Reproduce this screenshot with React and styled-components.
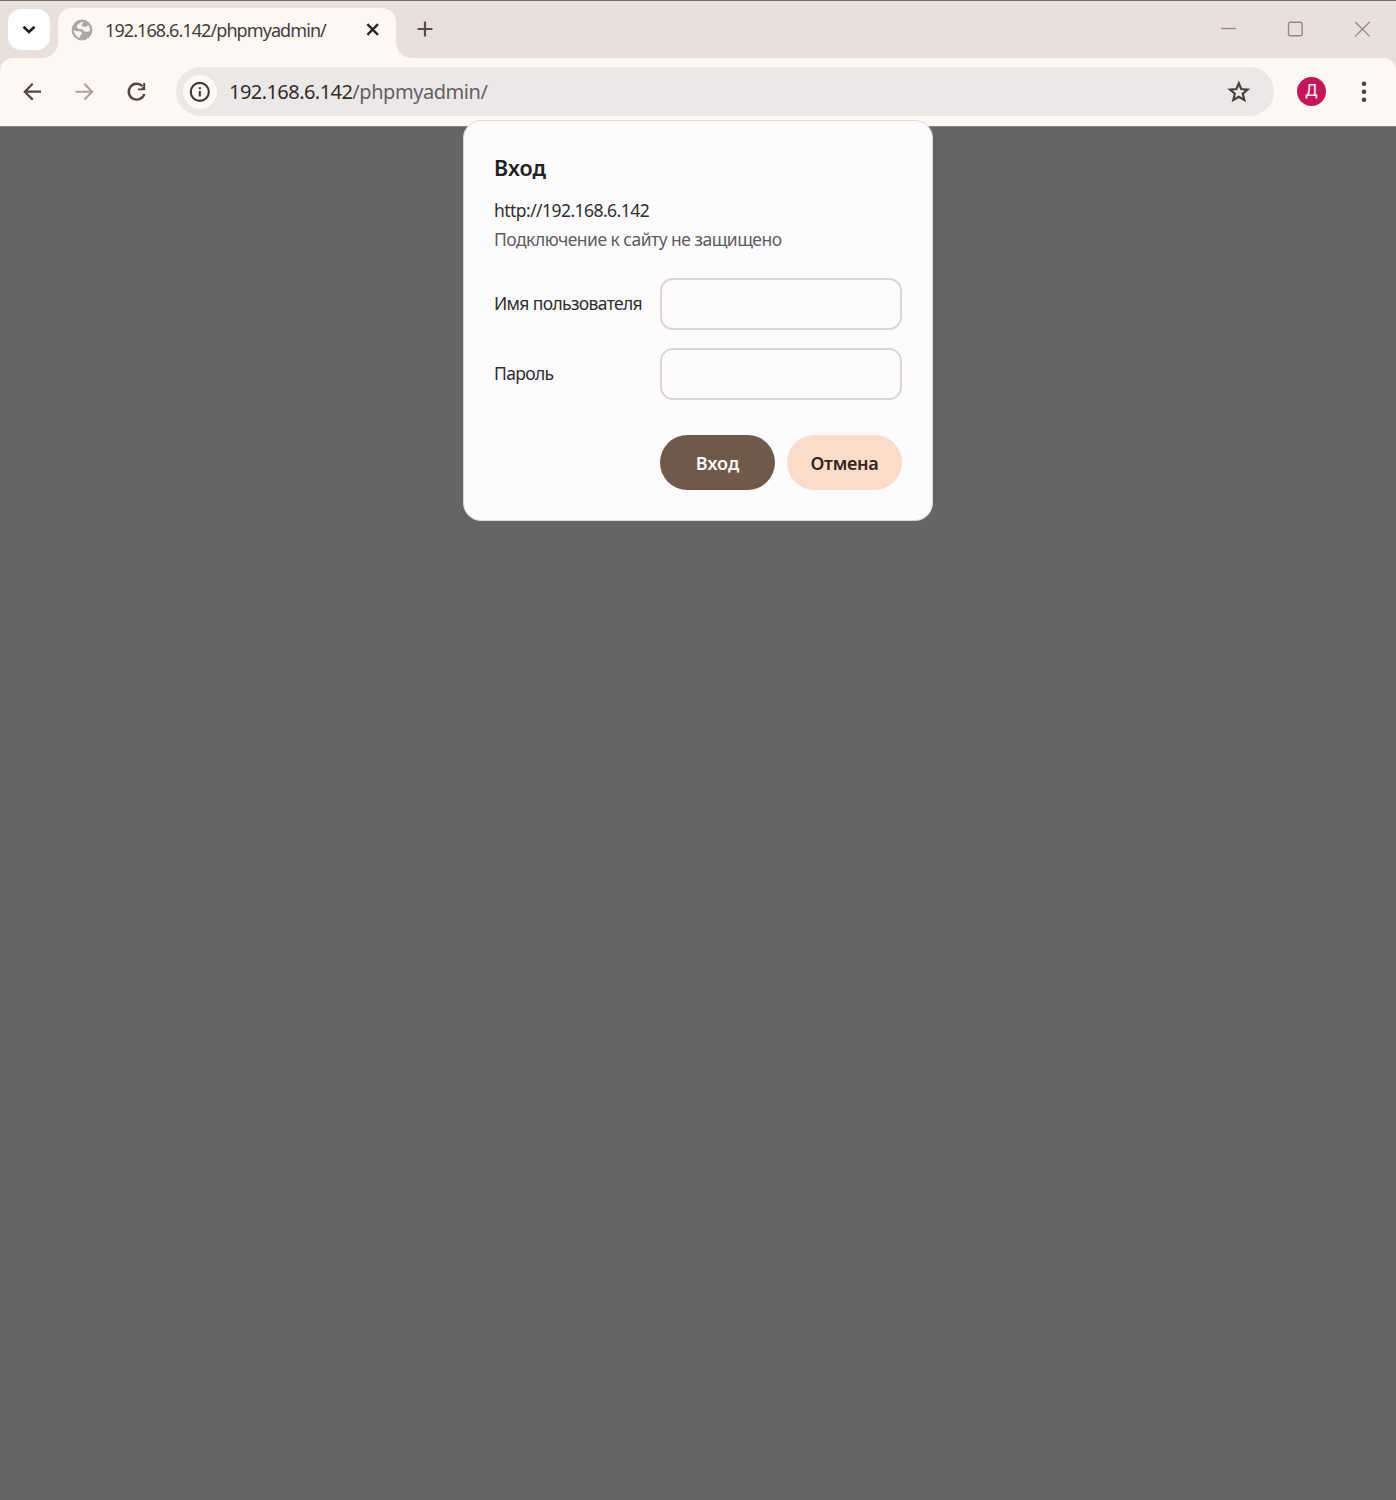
import React from "react";
import styled, { createGlobalStyle } from "styled-components";

const GlobalStyle = createGlobalStyle`
  * { box-sizing: border-box; }
  body {
    margin: 0;
    background: #656565;
    font-family: "Noto Sans", "Open Sans", sans-serif;
    color: #2a2624;
  }
  button { font: inherit; border: 0; padding: 0; background: none; color: inherit; }
`;

const Window = styled.div`
  display: flex;
  flex-direction: column;
  height: 1500px;
  background: #656565;
  overflow: hidden;
`;

const TitleBar = styled.header`
  display: flex;
  height: 58px;
  flex: none;
  padding: 7px 0 0 8px;
  border-top: 1px solid #7a6d6c;
  background: #eae0db;
`;

const TabSearch = styled.button`
  display: grid;
  place-items: center;
  width: 42px;
  height: 41px;
  margin-top: 1px;
  border-radius: 13px;
  background: #fffefe;
`;

const Tab = styled.div`
  position: relative;
  display: flex;
  align-items: center;
  width: 338px;
  height: 50px;
  margin-left: 8px;
  padding: 0 13px 6px 13px;
  border-radius: 14px 14px 0 0;
  background: #fef8f5;

  &::before,
  &::after {
    content: "";
    position: absolute;
    bottom: 0;
    width: 15px;
    height: 15px;
  }
  &::before {
    right: 100%;
    background: radial-gradient(circle at 0 0, transparent 14.5px, #fef8f5 15px);
  }
  &::after {
    left: 100%;
    background: radial-gradient(circle at 100% 0, transparent 14.5px, #fef8f5 15px);
  }
`;

const TabTitle = styled.span`
  flex: 1;
  margin-left: 12px;
  font-size: 18px;
  line-height: 24px;
  letter-spacing: ${(p) => p.$track}px;
  white-space: nowrap;
  color: #423d3b;
`;

const NewTab = styled.button`
  display: grid;
  place-items: center;
  width: 30px;
  height: 42px;
  margin-left: 14px;
`;

const WindowControls = styled.div`
  display: flex;
  gap: 51px;
  margin-left: auto;
  padding: 13px 26px 0 0;
  color: #93877f;
`;

const Toolbar = styled.nav`
  display: flex;
  align-items: center;
  height: 68px;
  padding: 0 0 1px 20px;
  border-radius: 13px 13px 0 0;
  background: #fef8f5;
  color: #51473f;
`;

const ToolbarWrap = styled.div`
  flex: none;
  background: #eae0db;
`;

const NavButtons = styled.div`
  display: flex;
  gap: 28px;
`;

const NavButton = styled.button`
  display: grid;
  place-items: center;
  width: 24px;
  height: 24px;
  color: ${(p) => (p.$disabled ? "#aaa19c" : "#51473f")};
`;

const Omnibox = styled.div`
  display: flex;
  align-items: center;
  width: 1098px;
  height: 49px;
  margin-left: 28px;
  padding: 0 23px 0 7px;
  border-radius: 25px;
  background: #ece8e8;
`;

const SiteInfo = styled.button`
  display: grid;
  place-items: center;
  width: 34px;
  height: 34px;
  border-radius: 50%;
  background: #fef9f7;
  color: #3c3836;
`;

const Url = styled.span`
  flex: 1;
  margin-left: 12px;
  font-size: 20px;
  line-height: 28px;
  letter-spacing: ${(p) => p.$track}px;
  white-space: nowrap;
  color: #64605f;
`;

const Host = styled.span`
  color: #302d2c;
  letter-spacing: -0.55px;
`;

const Avatar = styled.span`
  display: grid;
  place-items: center;
  width: 29px;
  height: 29px;
  margin-left: 23px;
  padding-bottom: 2px;
  border-radius: 50%;
  background: #c2185b;
  color: #fbe4ee;
  font-size: 16px;
  font-weight: 500;
  line-height: 27px;
`;

const MenuButton = styled(NavButton)`
  margin-left: 26px;
  color: #45403e;
`;

const Page = styled.main`
  display: flex;
  justify-content: center;
  align-items: flex-start;
  flex: 1;
  box-shadow: inset 0 1px 0 #8b8987;
`;

const Dialog = styled.form`
  display: flex;
  flex-direction: column;
  width: 470px;
  height: 401px;
  margin-top: -6px;
  padding: 31px 30px 0;
  border: 1px solid #dcd6d6;
  border-radius: 18px;
  background: #fdfbfe;
`;

const Line = styled.div`
  font-size: ${(p) => p.$size}px;
  font-weight: ${(p) => p.$weight || 400};
  line-height: ${(p) => p.$height}px;
  letter-spacing: ${(p) => p.$track}px;
  color: ${(p) => p.$color || "#302d30"};
  margin-top: ${(p) => p.$top || 0}px;
  white-space: nowrap;
`;

const Fields = styled.div`
  display: grid;
  grid-template-columns: 166px 242px;
  row-gap: 18px;
  align-items: center;
  margin-top: 24px;
`;

const Label = styled.label`
  padding-bottom: 2px;
  font-size: 17.5px;
  line-height: 30px;
  letter-spacing: -0.65px;
  color: #302d30;
  white-space: nowrap;
`;

const Input = styled.input`
  width: 242px;
  height: 52px;
  padding: 0 14px;
  border: 2px solid #d9d5d9;
  border-radius: 13px;
  background: #fdfbfe;
  font: inherit;
  outline: none;
`;

const Actions = styled.div`
  display: flex;
  justify-content: flex-end;
  gap: 12px;
  margin-top: 35px;
`;

const Action = styled.button`
  width: 115px;
  height: 55px;
  border-radius: 28px;
  background: ${(p) => (p.$primary ? "#6f594b" : "#fbdccb")};
  color: ${(p) => (p.$primary ? "#fffaf5" : "#332620")};
  font-size: 18px;
  font-weight: 600;
  letter-spacing: ${(p) => p.$track}px;
`;

const Icon = ({ w = 24, h = w, sw = 2, children, ...rest }) => (
  <svg width={w} height={h} viewBox={`0 0 ${w} ${h}`} fill="none" stroke="currentColor" strokeWidth={sw} {...rest}>
    {children}
  </svg>
);

const Globe = () => (
  <svg width="22" height="22" viewBox="0 0 22 22">
    <circle cx="11" cy="11" r="10.4" fill="#aaa8a7" />
    <path
      d="M12.6 2.8 C9.4 3.2 6.6 5 5.8 7.4 C5.9 9.4 7.4 10 9.6 10 C11.8 10 12.8 10.8 12.8 12.6 C14.6 12.8 16.6 12.8 18.8 12.2 C19.3 9.8 18.6 7.6 17 5.8 C16.4 7.4 15.2 8 13.6 7.8 C11.6 7.6 10.6 6.8 11 5.4 C11.3 4.4 12.2 4 12.6 2.8 Z"
      fill="#f7f2ef"
    />
    <path
      d="M2.6 10.8 C2.8 14.6 5.2 17.8 9 18.9 C9.4 17.4 9 16.6 9.8 15.8 C10.8 15 11.2 14.2 10.6 13.2 C9.8 12 8 12.2 6.4 12.2 C4.8 12.2 3.4 12 2.6 10.8 Z"
      fill="#f7f2ef"
    />
  </svg>
);

export default function App() {
  return (
    <Window>
      <GlobalStyle />
      <TitleBar>
        <TabSearch type="button">
          <Icon w={14} h={10} sw={2.6} color="#1f1c1b">
            <path d="M1.5 1.8 L7 7 L12.5 1.8" />
          </Icon>
        </TabSearch>
        <Tab>
          <Globe />
          <TabTitle $track={-0.92}>192.168.6.142/phpmyadmin/</TabTitle>
          <Icon w={21} sw={2.4} color="#2b2725">
            <path d="M5.4 4.2 L16 14.8 M16 4.2 L5.4 14.8" />
          </Icon>
        </Tab>
        <NewTab type="button">
          <Icon w={16} sw={2.2} color="#584d47">
            <path d="M8 0.5 V15.5 M0.5 8 H15.5" />
          </Icon>
        </NewTab>
        <WindowControls>
          <Icon w={16} sw={1.3}>
            <path d="M1 7.5 H16" />
          </Icon>
          <Icon w={16} sw={1.4}>
            <rect x="1.5" y="1.2" width="13.6" height="13.6" rx="1.8" />
          </Icon>
          <Icon w={16} sw={1.3}>
            <path d="M1.2 1 L15.6 15.4 M15.6 1 L1.2 15.4" />
          </Icon>
        </WindowControls>
      </TitleBar>
      <ToolbarWrap>
        <Toolbar>
          <NavButtons>
            <NavButton type="button">
              <Icon sw={2.2}>
                <path d="M21 11.7 H5 M12.7 3.8 L4.8 11.7 L12.7 19.6" />
              </Icon>
            </NavButton>
            <NavButton type="button" $disabled>
              <Icon sw={2.1}>
                <path d="M3.5 11.7 H20 M12.3 3.8 L20.2 11.7 L12.3 19.6" />
              </Icon>
            </NavButton>
            <NavButton type="button">
              <Icon sw={2.4}>
                <path d="M20.4 14 A8 7.9 0 1 1 18.4 6.1" />
                <path d="M21.2 2.9 V10.3 H13.9 V8.4 H17.2 L19.2 6.4 V2.9 Z" fill="currentColor" stroke="none" />
              </Icon>
            </NavButton>
          </NavButtons>
          <Omnibox>
            <SiteInfo type="button">
              <Icon w={22} sw={2.1}>
                <circle cx="10.8" cy="10.9" r="9" />
                <path d="M10.8 10 V15.6 M10.8 6.2 V8.3" />
              </Icon>
            </SiteInfo>
            <Url $track={-0.45}>
              <Host>192.168.6.142</Host>/phpmyadmin/
            </Url>
            <Icon sw={2.2} color="#46423f">
              <path d="M11.8 3.3 L14.2 9 L20.6 9.6 L15.8 13.7 L17.3 19.9 L11.8 16.7 L6.3 19.9 L7.8 13.7 L3 9.6 L9.4 9 Z" />
            </Icon>
          </Omnibox>
          <Avatar>Д</Avatar>
          <MenuButton type="button">
            <Icon fill="currentColor" stroke="none">
              <circle cx="12" cy="3.7" r="2.3" />
              <circle cx="12" cy="11.7" r="2.3" />
              <circle cx="12" cy="19.7" r="2.3" />
            </Icon>
          </MenuButton>
        </Toolbar>
      </ToolbarWrap>
      <Page>
        <Dialog>
          <Line $size={21.5} $weight={600} $height={32} $track={0.1} $color="#232022">Вход</Line>
          <Line $size={17.5} $height={30} $track={-0.55} $top={11}>http://192.168.6.142</Line>
          <Line $size={17.5} $height={29} $track={-0.52} $color="#5f5b5e">Подключение к сайту не защищено</Line>
          <Fields>
            <Label htmlFor="username">Имя пользователя</Label>
            <Input id="username" type="text" />
            <Label htmlFor="password">Пароль</Label>
            <Input id="password" type="password" />
          </Fields>
          <Actions>
            <Action type="button" $primary $track={0}>Вход</Action>
            <Action type="button" $track={-0.25}>Отмена</Action>
          </Actions>
        </Dialog>
      </Page>
    </Window>
  );
}
